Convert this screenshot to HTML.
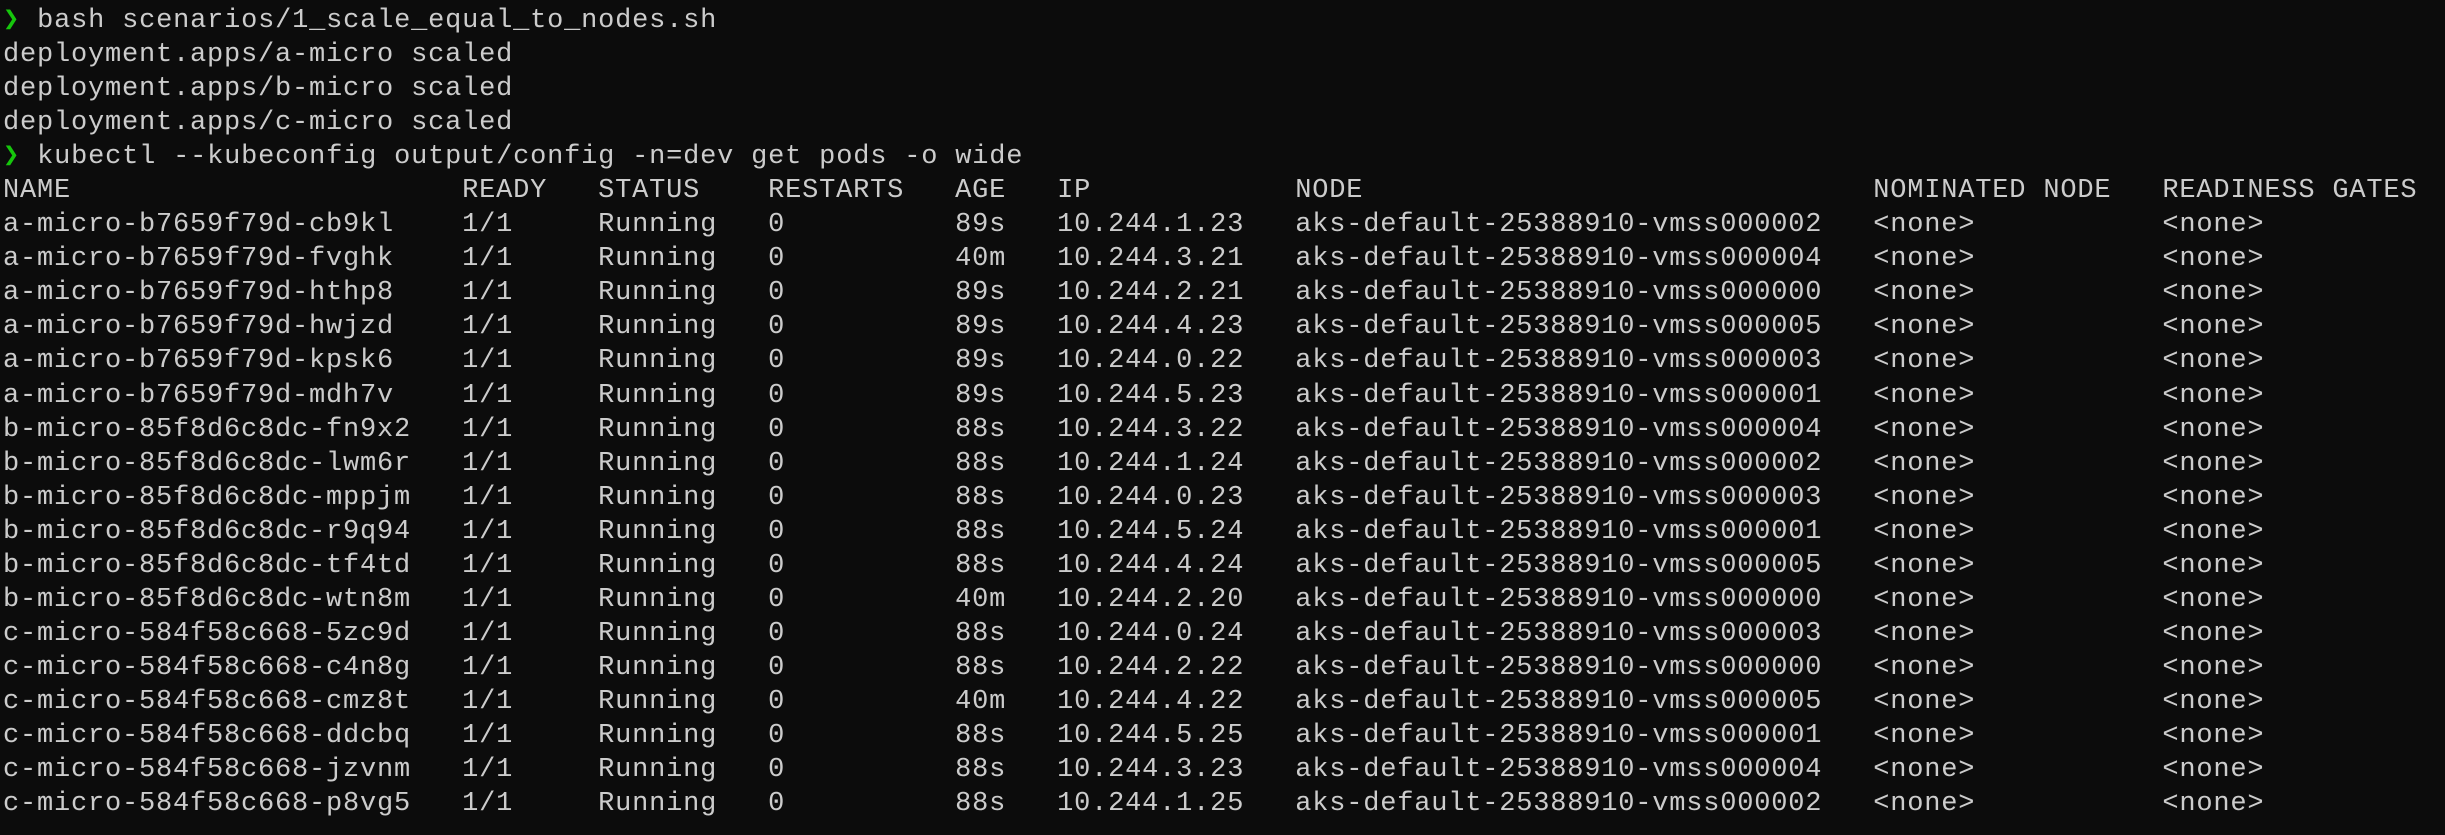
<!DOCTYPE html>
<html><head><meta charset="utf-8"><style>
html,body{margin:0;padding:0;background:#0c0c0c;width:2445px;height:835px;overflow:hidden}
pre{margin:0;position:absolute;left:3px;top:4px;font-family:"Liberation Mono","DejaVu Sans Mono",monospace;font-size:27px;letter-spacing:0.8px;line-height:34.05px;color:#cccccc}
.g{color:#16c60c}
</style></head><body><pre><span class="g">❯</span> bash scenarios/1_scale_equal_to_nodes.sh
deployment.apps/a-micro scaled
deployment.apps/b-micro scaled
deployment.apps/c-micro scaled
<span class="g">❯</span> kubectl --kubeconfig output/config -n=dev get pods -o wide
NAME                       READY   STATUS    RESTARTS   AGE   IP            NODE                              NOMINATED NODE   READINESS GATES
a-micro-b7659f79d-cb9kl    1/1     Running   0          89s   10.244.1.23   aks-default-25388910-vmss000002   &lt;none&gt;           &lt;none&gt;
a-micro-b7659f79d-fvghk    1/1     Running   0          40m   10.244.3.21   aks-default-25388910-vmss000004   &lt;none&gt;           &lt;none&gt;
a-micro-b7659f79d-hthp8    1/1     Running   0          89s   10.244.2.21   aks-default-25388910-vmss000000   &lt;none&gt;           &lt;none&gt;
a-micro-b7659f79d-hwjzd    1/1     Running   0          89s   10.244.4.23   aks-default-25388910-vmss000005   &lt;none&gt;           &lt;none&gt;
a-micro-b7659f79d-kpsk6    1/1     Running   0          89s   10.244.0.22   aks-default-25388910-vmss000003   &lt;none&gt;           &lt;none&gt;
a-micro-b7659f79d-mdh7v    1/1     Running   0          89s   10.244.5.23   aks-default-25388910-vmss000001   &lt;none&gt;           &lt;none&gt;
b-micro-85f8d6c8dc-fn9x2   1/1     Running   0          88s   10.244.3.22   aks-default-25388910-vmss000004   &lt;none&gt;           &lt;none&gt;
b-micro-85f8d6c8dc-lwm6r   1/1     Running   0          88s   10.244.1.24   aks-default-25388910-vmss000002   &lt;none&gt;           &lt;none&gt;
b-micro-85f8d6c8dc-mppjm   1/1     Running   0          88s   10.244.0.23   aks-default-25388910-vmss000003   &lt;none&gt;           &lt;none&gt;
b-micro-85f8d6c8dc-r9q94   1/1     Running   0          88s   10.244.5.24   aks-default-25388910-vmss000001   &lt;none&gt;           &lt;none&gt;
b-micro-85f8d6c8dc-tf4td   1/1     Running   0          88s   10.244.4.24   aks-default-25388910-vmss000005   &lt;none&gt;           &lt;none&gt;
b-micro-85f8d6c8dc-wtn8m   1/1     Running   0          40m   10.244.2.20   aks-default-25388910-vmss000000   &lt;none&gt;           &lt;none&gt;
c-micro-584f58c668-5zc9d   1/1     Running   0          88s   10.244.0.24   aks-default-25388910-vmss000003   &lt;none&gt;           &lt;none&gt;
c-micro-584f58c668-c4n8g   1/1     Running   0          88s   10.244.2.22   aks-default-25388910-vmss000000   &lt;none&gt;           &lt;none&gt;
c-micro-584f58c668-cmz8t   1/1     Running   0          40m   10.244.4.22   aks-default-25388910-vmss000005   &lt;none&gt;           &lt;none&gt;
c-micro-584f58c668-ddcbq   1/1     Running   0          88s   10.244.5.25   aks-default-25388910-vmss000001   &lt;none&gt;           &lt;none&gt;
c-micro-584f58c668-jzvnm   1/1     Running   0          88s   10.244.3.23   aks-default-25388910-vmss000004   &lt;none&gt;           &lt;none&gt;
c-micro-584f58c668-p8vg5   1/1     Running   0          88s   10.244.1.25   aks-default-25388910-vmss000002   &lt;none&gt;           &lt;none&gt;
</pre></body></html>
